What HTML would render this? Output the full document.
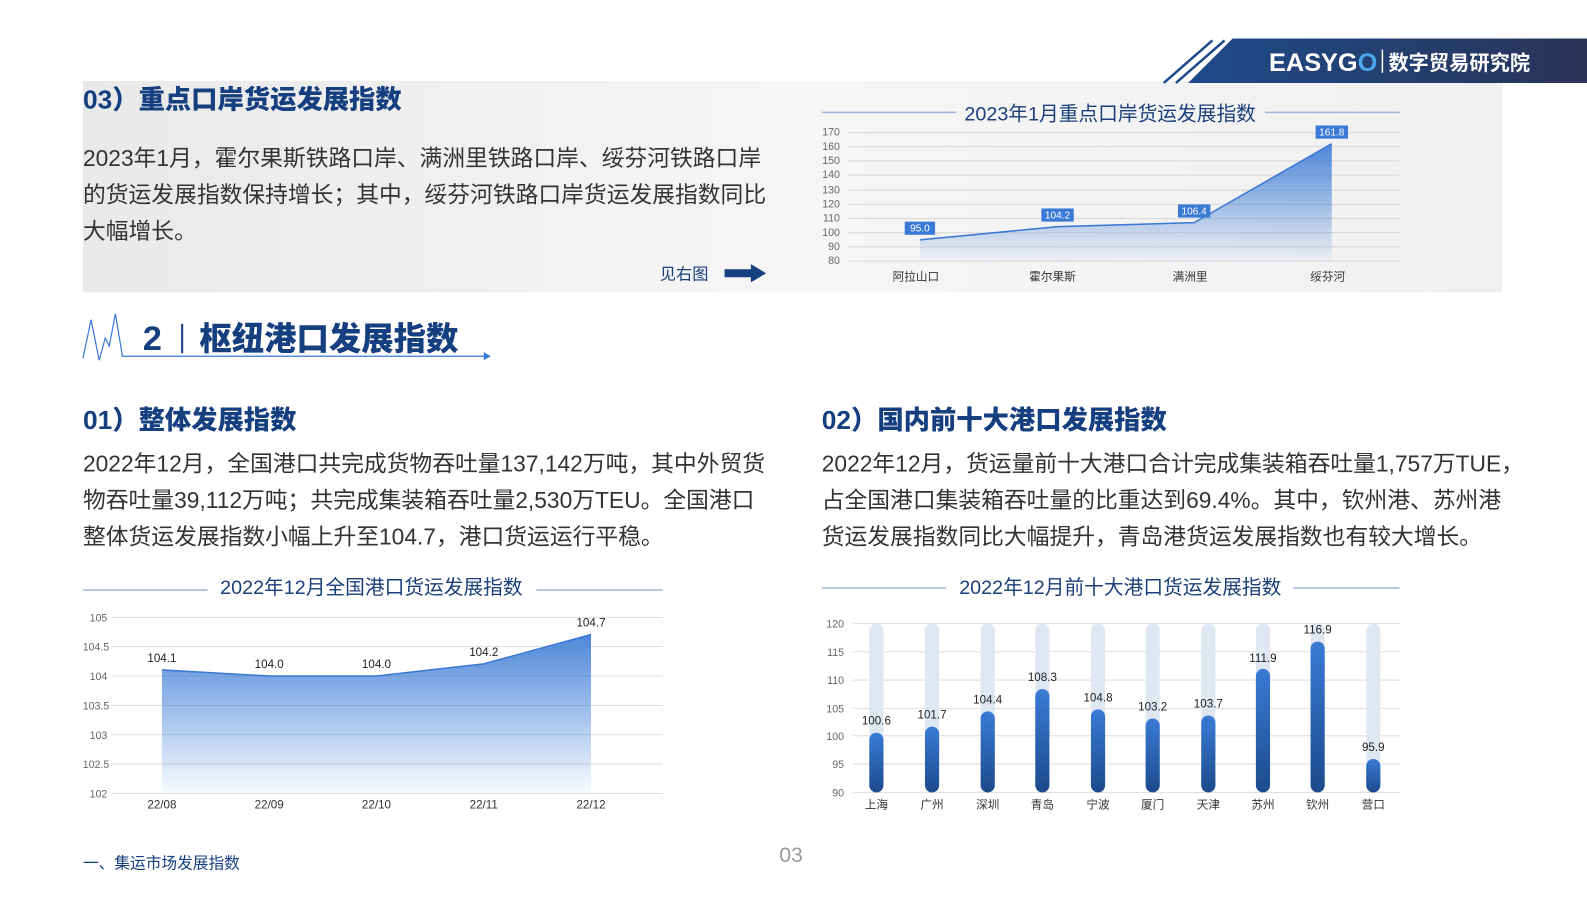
<!DOCTYPE html>
<html><head><meta charset="utf-8"><style>
body{margin:0;width:1587px;height:893px;background:#fff;position:relative;overflow:hidden;font-family:"Liberation Sans","Noto Sans CJK SC",sans-serif}
#w{position:absolute;left:0;top:0;width:1587px;height:893px;transform:scale(1.012);transform-origin:0 0}
.a{position:absolute;white-space:nowrap}
.h{color:#163f80;font-weight:900;font-size:26px}
.p{color:#333;font-size:22.5px;line-height:36px}
</style></head><body><div id="w">
<div class="a" style="left:82px;top:80px;width:1403px;height:209px;background:linear-gradient(90deg,#e9e9e9,#f6f6f6 50%,#f0f0f0)"></div>
<svg class="a" style="left:0;top:0" width="1587" height="893">
<defs>
<linearGradient id="ga" x1="0" y1="0" x2="0" y2="1"><stop offset="0" stop-color="#3a7ad6" stop-opacity=".9"/><stop offset="1" stop-color="#3a7ad6" stop-opacity=".03"/></linearGradient>
<linearGradient id="gb" x1="0" y1="0" x2="0" y2="1"><stop offset="0" stop-color="#3a7bd5"/><stop offset="1" stop-color="#1c4a8c"/></linearGradient>
<linearGradient id="gh" x1="0" x2="1"><stop offset="0" stop-color="#1e4a8a"/><stop offset="1" stop-color="#2a3354"/></linearGradient>
</defs>
<polygon points="1218,38 1587,38 1587,82 1174,82" fill="url(#gh)"/>
<line x1="1150" y1="82" x2="1198" y2="40" stroke="#1e4a8a" stroke-width="2.5"/>
<line x1="1162" y1="82" x2="1210" y2="40" stroke="#1e4a8a" stroke-width="2.5"/>
<text x="1254" y="70" font-size="25" font-weight="bold" fill="#fff" font-family="Liberation Sans">EASYG<tspan fill="#4aa8ea">O</tspan></text>
<line x1="1366" y1="49" x2="1366" y2="72" stroke="#fff" stroke-width="1.5"/>
<text x="1372" y="69" font-size="20" font-weight="bold" fill="#fff">数字贸易研究院</text>
<line x1="812" y1="111" x2="945" y2="111" stroke="#9cb6dc" stroke-width="1.5"/>
<line x1="1250" y1="111" x2="1383" y2="111" stroke="#9cb6dc" stroke-width="1.5"/>
<text x="1097" y="119" font-size="19.5" fill="#1a3f7a" text-anchor="middle">2023年1月重点口岸货运发展指数</text>
<g stroke="#d6d6d6" stroke-width="1">
<line x1="838" y1="131" x2="1383" y2="131"/><line x1="838" y1="145" x2="1383" y2="145"/><line x1="838" y1="159" x2="1383" y2="159"/><line x1="838" y1="173" x2="1383" y2="173"/><line x1="838" y1="188" x2="1383" y2="188"/><line x1="838" y1="202" x2="1383" y2="202"/><line x1="838" y1="216" x2="1383" y2="216"/><line x1="838" y1="230" x2="1383" y2="230"/><line x1="838" y1="244" x2="1383" y2="244"/><line x1="838" y1="258" x2="1383" y2="258"/></g>
<g font-size="10.5" fill="#666" text-anchor="end"><text x="830" y="134">170</text><text x="830" y="148">160</text><text x="830" y="162">150</text><text x="830" y="176">140</text><text x="830" y="191">130</text><text x="830" y="205">120</text><text x="830" y="219">110</text><text x="830" y="233">100</text><text x="830" y="247">90</text><text x="830" y="261">80</text></g>
<polygon points="909,237 1045,224 1180,220 1316,142 1316,258 909,258" fill="url(#ga)"/>
<polyline points="909,237 1045,224 1180,220 1316,142" fill="none" stroke="#3a78d4" stroke-width="1.5"/>
<g font-size="10" fill="#fff" text-anchor="middle">
<rect x="894" y="219" width="30" height="13" fill="#3a7ad6"/><text x="909" y="229">95.0</text>
<rect x="1029" y="206" width="32" height="13" fill="#3a7ad6"/><text x="1045" y="216">104.2</text>
<rect x="1164" y="202" width="32" height="13" fill="#3a7ad6"/><text x="1180" y="212">106.4</text>
<rect x="1300" y="124" width="32" height="13" fill="#3a7ad6"/><text x="1316" y="134">161.8</text></g>
<g font-size="11.5" fill="#333" text-anchor="middle"><text x="905" y="277">阿拉山口</text><text x="1040" y="277">霍尔果斯</text><text x="1176" y="277">满洲里</text><text x="1312" y="277">绥芬河</text></g>
<text x="700" y="276" font-size="16" fill="#1a3f7a" text-anchor="end">见右图</text>
<polygon points="716,266 742,266 742,261 757,270 742,279 742,274 716,274" fill="#163f80"/>
<polyline points="82,354 90,316 98,356 104,334 108,342 114,310 121,352 483,352" fill="none" stroke="#3a78d4" stroke-width="1.2"/>
<polygon points="478,348 485,352 478,356" fill="#3a78d4"/>
<text x="141" y="346" font-size="34" font-weight="900" fill="#163f80">2</text>
<line x1="180" y1="320" x2="180" y2="349" stroke="#163f80" stroke-width="2"/>
<text x="197" y="346" font-size="32" font-weight="900" fill="#163f80">枢纽港口发展指数</text>
<line x1="82" y1="583" x2="205" y2="583" stroke="#9cb6dc" stroke-width="1.5"/>
<line x1="530" y1="583" x2="655" y2="583" stroke="#9cb6dc" stroke-width="1.5"/>
<text x="367" y="587" font-size="19.5" fill="#1a3f7a" text-anchor="middle">2022年12月全国港口货运发展指数</text>
<g stroke="#ddd"><line x1="110" y1="610" x2="655" y2="610"/><line x1="110" y1="639" x2="655" y2="639"/><line x1="110" y1="668" x2="655" y2="668"/><line x1="110" y1="697" x2="655" y2="697"/><line x1="110" y1="726" x2="655" y2="726"/><line x1="110" y1="755" x2="655" y2="755"/><line x1="110" y1="784" x2="655" y2="784"/></g>
<g font-size="10.5" fill="#666" text-anchor="end"><text x="106" y="614">105</text><text x="108" y="643">104.5</text><text x="106" y="672">104</text><text x="108" y="701">103.5</text><text x="106" y="730">103</text><text x="108" y="759">102.5</text><text x="106" y="788">102</text></g>
<polygon points="160,662 266,668 372,668 478,656 584,627 584,784 160,784" fill="url(#ga)"/>
<polyline points="160,662 266,668 372,668 478,656 584,627" fill="none" stroke="#3a78d4" stroke-width="1.5"/>
<g font-size="11.5" fill="#222" text-anchor="middle"><text x="160" y="654">104.1</text><text x="266" y="660">104.0</text><text x="372" y="660">104.0</text><text x="478" y="648">104.2</text><text x="584" y="619">104.7</text></g>
<g font-size="11.5" fill="#333" text-anchor="middle"><text x="160" y="799">22/08</text><text x="266" y="799">22/09</text><text x="372" y="799">22/10</text><text x="478" y="799">22/11</text><text x="584" y="799">22/12</text></g>
<line x1="812" y1="581" x2="935" y2="581" stroke="#9cb6dc" stroke-width="1.5"/>
<line x1="1278" y1="581" x2="1383" y2="581" stroke="#9cb6dc" stroke-width="1.5"/>
<text x="1107" y="587" font-size="19.5" fill="#1a3f7a" text-anchor="middle">2022年12月前十大港口货运发展指数</text>
<g stroke="#ddd"><line x1="843" y1="616" x2="1383" y2="616"/><line x1="843" y1="644" x2="1383" y2="644"/><line x1="843" y1="672" x2="1383" y2="672"/><line x1="843" y1="700" x2="1383" y2="700"/><line x1="843" y1="727" x2="1383" y2="727"/><line x1="843" y1="755" x2="1383" y2="755"/><line x1="843" y1="783" x2="1383" y2="783"/></g>
<g font-size="10.5" fill="#666" text-anchor="end"><text x="834" y="620">120</text><text x="834" y="648">115</text><text x="834" y="676">110</text><text x="834" y="704">105</text><text x="834" y="731">100</text><text x="834" y="759">95</text><text x="834" y="787">90</text></g>
<g fill="#dfe7f3"><rect x="859" y="616" width="14" height="167" rx="7"/><rect x="914" y="616" width="14" height="167" rx="7"/><rect x="969" y="616" width="14" height="167" rx="7"/><rect x="1023" y="616" width="14" height="167" rx="7"/><rect x="1078" y="616" width="14" height="167" rx="7"/><rect x="1132" y="616" width="14" height="167" rx="7"/><rect x="1187" y="616" width="14" height="167" rx="7"/><rect x="1241" y="616" width="14" height="167" rx="7"/><rect x="1295" y="616" width="14" height="167" rx="7"/><rect x="1350" y="616" width="14" height="167" rx="7"/></g>
<g fill="url(#gb)"><rect x="859" y="724" width="14" height="59" rx="7"/><rect x="914" y="718" width="14" height="65" rx="7"/><rect x="969" y="703" width="14" height="80" rx="7"/><rect x="1023" y="681" width="14" height="102" rx="7"/><rect x="1078" y="701" width="14" height="82" rx="7"/><rect x="1132" y="710" width="14" height="73" rx="7"/><rect x="1187" y="707" width="14" height="76" rx="7"/><rect x="1241" y="661" width="14" height="122" rx="7"/><rect x="1295" y="634" width="14" height="149" rx="7"/><rect x="1350" y="750" width="14" height="33" rx="7"/></g>
<g font-size="11.5" fill="#222" text-anchor="middle"><text x="866" y="716">100.6</text><text x="921" y="710">101.7</text><text x="976" y="695">104.4</text><text x="1030" y="673">108.3</text><text x="1085" y="693">104.8</text><text x="1139" y="702">103.2</text><text x="1194" y="699">103.7</text><text x="1248" y="654">111.9</text><text x="1302" y="626">116.9</text><text x="1357" y="742">95.9</text></g>
<g font-size="11.5" fill="#333" text-anchor="middle"><text x="866" y="799">上海</text><text x="921" y="799">广州</text><text x="976" y="799">深圳</text><text x="1030" y="799">青岛</text><text x="1085" y="799">宁波</text><text x="1139" y="799">厦门</text><text x="1194" y="799">天津</text><text x="1248" y="799">苏州</text><text x="1302" y="799">钦州</text><text x="1357" y="799">营口</text></g>
</svg>
<div class="a h" style="left:82px;top:78px">03）重点口岸货运发展指数</div>
<div class="a p" style="left:82px;top:139px">2023年1月，霍尔果斯铁路口岸、满洲里铁路口岸、绥芬河铁路口岸<br>的货运发展指数保持增长；其中，绥芬河铁路口岸货运发展指数同比<br>大幅增长。</div>
<div class="a h" style="left:82px;top:395px">01）整体发展指数</div>
<div class="a p" style="left:82px;top:441px">2022年12月，全国港口共完成货物吞吐量137,142万吨，其中外贸货<br>物吞吐量39,112万吨；共完成集装箱吞吐量2,530万TEU。全国港口<br>整体货运发展指数小幅上升至104.7，港口货运运行平稳。</div>
<div class="a h" style="left:812px;top:395px">02）国内前十大港口发展指数</div>
<div class="a p" style="left:812px;top:441px">2022年12月，货运量前十大港口合计完成集装箱吞吐量1,757万TUE，<br>占全国港口集装箱吞吐量的比重达到69.4%。其中，钦州港、苏州港<br>货运发展指数同比大幅提升，青岛港货运发展指数也有较大增长。</div>
<div class="a" style="left:82px;top:841px;font-size:15.5px;color:#163f80">一、集运市场发展指数</div>
<div class="a" style="left:770px;top:834px;font-size:21px;color:#999">03</div>
</div></body></html>
